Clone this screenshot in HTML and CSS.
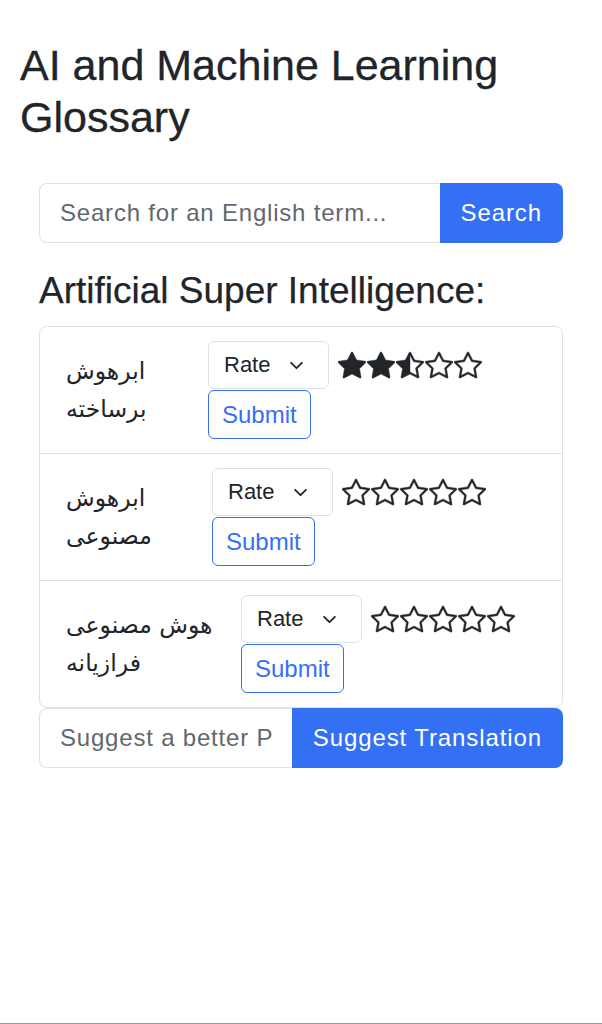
FILE: index.html
```html
<!DOCTYPE html>
<html lang="en">
<head>
<meta charset="utf-8">
<title>AI and Machine Learning Glossary</title>
<link rel="stylesheet" href="styles.css">
</head>
<body>
<div class="page">
  <h1 class="title">AI and Machine Learning Glossary</h1>
  <main class="panel">
    <form class="input-group search-group">
      <input class="field" type="text" placeholder="Search for an English term...">
      <button class="btn-primary" type="button">Search</button>
    </form>

    <h2 class="term-title">Artificial Super Intelligence:</h2>

    <div class="card">
      <div class="entry entry-1">
        <div class="persian" dir="rtl">ابرهوش برساخته</div>
        <div class="controls">
          <div class="rate-line">
            <div class="select"><span>Rate</span><svg class="chev" viewBox="0 0 16 10" width="16" height="10"><path d="M2 2l6 6 6-6" fill="none" stroke="#212529" stroke-width="2" stroke-linecap="round" stroke-linejoin="round"/></svg></div>
            <div class="stars">
              <svg class="star" viewBox="0 0 16 16"><path d="M3.612 15.443c-.386.198-.824-.149-.746-.592l.83-4.73L.173 6.765c-.329-.314-.158-.888.283-.95l4.898-.696L7.538.792c.197-.39.73-.39.927 0l2.184 4.327 4.898.696c.441.062.612.636.282.95l-3.522 3.356.83 4.73c.078.443-.36.79-.746.592L8 13.187l-4.389 2.256z"/></svg>
              <svg class="star" viewBox="0 0 16 16"><path d="M3.612 15.443c-.386.198-.824-.149-.746-.592l.83-4.73L.173 6.765c-.329-.314-.158-.888.283-.95l4.898-.696L7.538.792c.197-.39.73-.39.927 0l2.184 4.327 4.898.696c.441.062.612.636.282.95l-3.522 3.356.83 4.73c.078.443-.36.79-.746.592L8 13.187l-4.389 2.256z"/></svg>
              <svg class="star" viewBox="0 0 16 16"><path d="M5.354 5.119 7.538.792A.516.516 0 0 1 8 .5c.183 0 .366.097.465.292l2.184 4.327 4.898.696A.537.537 0 0 1 16 6.32a.548.548 0 0 1-.17.445l-3.523 3.356.83 4.73c.078.443-.36.79-.746.592L8 13.187l-4.389 2.256a.52.52 0 0 1-.146.05c-.342.06-.668-.254-.6-.642l.83-4.730L.173 6.765a.55.55 0 0 1-.172-.403.58.58 0 0 1 .085-.302.513.513 0 0 1 .37-.245l4.898-.696zM8 12.027a.5.5 0 0 1 .232.056l3.686 1.894-.694-3.957a.565.565 0 0 1 .162-.505l2.907-2.77-4.052-.576a.525.525 0 0 1-.393-.288L8.001 2.223 8 2.226v9.8z"/></svg>
              <svg class="star" viewBox="0 0 16 16"><path d="M2.866 14.85c-.078.444.36.791.746.593l4.39-2.256 4.389 2.256c.386.198.824-.149.746-.592l-.83-4.73 3.522-3.356c.33-.314.16-.888-.282-.95l-4.898-.696L8.465.792a.513.513 0 0 0-.927 0L5.354 5.12l-4.898.696c-.441.062-.612.636-.283.95l3.523 3.356-.83 4.73zm4.905-2.767-3.686 1.894.694-3.957a.565.565 0 0 0-.163-.505L1.71 6.745l4.052-.576a.525.525 0 0 0 .393-.288L8 2.223l1.847 3.658a.525.525 0 0 0 .393.288l4.052.575-2.906 2.77a.565.565 0 0 0-.163.506l.694 3.957-3.686-1.894a.503.503 0 0 0-.461 0z"/></svg>
              <svg class="star" viewBox="0 0 16 16"><path d="M2.866 14.85c-.078.444.36.791.746.593l4.39-2.256 4.389 2.256c.386.198.824-.149.746-.592l-.83-4.73 3.522-3.356c.33-.314.16-.888-.282-.95l-4.898-.696L8.465.792a.513.513 0 0 0-.927 0L5.354 5.12l-4.898.696c-.441.062-.612.636-.283.95l3.523 3.356-.83 4.73zm4.905-2.767-3.686 1.894.694-3.957a.565.565 0 0 0-.163-.505L1.71 6.745l4.052-.576a.525.525 0 0 0 .393-.288L8 2.223l1.847 3.658a.525.525 0 0 0 .393.288l4.052.575-2.906 2.77a.565.565 0 0 0-.163.506l.694 3.957-3.686-1.894a.503.503 0 0 0-.461 0z"/></svg>
            </div>
          </div>
          <button class="btn-outline" type="button">Submit</button>
        </div>
      </div>

      <div class="entry entry-2">
        <div class="persian" dir="rtl">ابرهوش مصنوعی</div>
        <div class="controls">
          <div class="rate-line">
            <div class="select"><span>Rate</span><svg class="chev" viewBox="0 0 16 10" width="16" height="10"><path d="M2 2l6 6 6-6" fill="none" stroke="#212529" stroke-width="2" stroke-linecap="round" stroke-linejoin="round"/></svg></div>
            <div class="stars">
              <svg class="star" viewBox="0 0 16 16"><path d="M2.866 14.85c-.078.444.36.791.746.593l4.39-2.256 4.389 2.256c.386.198.824-.149.746-.592l-.83-4.73 3.522-3.356c.33-.314.16-.888-.282-.95l-4.898-.696L8.465.792a.513.513 0 0 0-.927 0L5.354 5.12l-4.898.696c-.441.062-.612.636-.283.95l3.523 3.356-.83 4.73zm4.905-2.767-3.686 1.894.694-3.957a.565.565 0 0 0-.163-.505L1.71 6.745l4.052-.576a.525.525 0 0 0 .393-.288L8 2.223l1.847 3.658a.525.525 0 0 0 .393.288l4.052.575-2.906 2.77a.565.565 0 0 0-.163.506l.694 3.957-3.686-1.894a.503.503 0 0 0-.461 0z"/></svg>
              <svg class="star" viewBox="0 0 16 16"><path d="M2.866 14.85c-.078.444.36.791.746.593l4.39-2.256 4.389 2.256c.386.198.824-.149.746-.592l-.83-4.73 3.522-3.356c.33-.314.16-.888-.282-.95l-4.898-.696L8.465.792a.513.513 0 0 0-.927 0L5.354 5.12l-4.898.696c-.441.062-.612.636-.283.95l3.523 3.356-.83 4.73zm4.905-2.767-3.686 1.894.694-3.957a.565.565 0 0 0-.163-.505L1.71 6.745l4.052-.576a.525.525 0 0 0 .393-.288L8 2.223l1.847 3.658a.525.525 0 0 0 .393.288l4.052.575-2.906 2.77a.565.565 0 0 0-.163.506l.694 3.957-3.686-1.894a.503.503 0 0 0-.461 0z"/></svg>
              <svg class="star" viewBox="0 0 16 16"><path d="M2.866 14.85c-.078.444.36.791.746.593l4.39-2.256 4.389 2.256c.386.198.824-.149.746-.592l-.83-4.73 3.522-3.356c.33-.314.16-.888-.282-.95l-4.898-.696L8.465.792a.513.513 0 0 0-.927 0L5.354 5.12l-4.898.696c-.441.062-.612.636-.283.95l3.523 3.356-.83 4.73zm4.905-2.767-3.686 1.894.694-3.957a.565.565 0 0 0-.163-.505L1.71 6.745l4.052-.576a.525.525 0 0 0 .393-.288L8 2.223l1.847 3.658a.525.525 0 0 0 .393.288l4.052.575-2.906 2.77a.565.565 0 0 0-.163.506l.694 3.957-3.686-1.894a.503.503 0 0 0-.461 0z"/></svg>
              <svg class="star" viewBox="0 0 16 16"><path d="M2.866 14.85c-.078.444.36.791.746.593l4.39-2.256 4.389 2.256c.386.198.824-.149.746-.592l-.83-4.73 3.522-3.356c.33-.314.16-.888-.282-.95l-4.898-.696L8.465.792a.513.513 0 0 0-.927 0L5.354 5.12l-4.898.696c-.441.062-.612.636-.283.95l3.523 3.356-.83 4.73zm4.905-2.767-3.686 1.894.694-3.957a.565.565 0 0 0-.163-.505L1.71 6.745l4.052-.576a.525.525 0 0 0 .393-.288L8 2.223l1.847 3.658a.525.525 0 0 0 .393.288l4.052.575-2.906 2.77a.565.565 0 0 0-.163.506l.694 3.957-3.686-1.894a.503.503 0 0 0-.461 0z"/></svg>
              <svg class="star" viewBox="0 0 16 16"><path d="M2.866 14.85c-.078.444.36.791.746.593l4.39-2.256 4.389 2.256c.386.198.824-.149.746-.592l-.83-4.73 3.522-3.356c.33-.314.16-.888-.282-.95l-4.898-.696L8.465.792a.513.513 0 0 0-.927 0L5.354 5.12l-4.898.696c-.441.062-.612.636-.283.95l3.523 3.356-.83 4.73zm4.905-2.767-3.686 1.894.694-3.957a.565.565 0 0 0-.163-.505L1.71 6.745l4.052-.576a.525.525 0 0 0 .393-.288L8 2.223l1.847 3.658a.525.525 0 0 0 .393.288l4.052.575-2.906 2.77a.565.565 0 0 0-.163.506l.694 3.957-3.686-1.894a.503.503 0 0 0-.461 0z"/></svg>
            </div>
          </div>
          <button class="btn-outline" type="button">Submit</button>
        </div>
      </div>

      <div class="entry entry-3">
        <div class="persian" dir="rtl">هوش مصنوعی فرازیانه</div>
        <div class="controls">
          <div class="rate-line">
            <div class="select"><span>Rate</span><svg class="chev" viewBox="0 0 16 10" width="16" height="10"><path d="M2 2l6 6 6-6" fill="none" stroke="#212529" stroke-width="2" stroke-linecap="round" stroke-linejoin="round"/></svg></div>
            <div class="stars">
              <svg class="star" viewBox="0 0 16 16"><path d="M2.866 14.85c-.078.444.36.791.746.593l4.39-2.256 4.389 2.256c.386.198.824-.149.746-.592l-.83-4.73 3.522-3.356c.33-.314.16-.888-.282-.95l-4.898-.696L8.465.792a.513.513 0 0 0-.927 0L5.354 5.12l-4.898.696c-.441.062-.612.636-.283.95l3.523 3.356-.83 4.73zm4.905-2.767-3.686 1.894.694-3.957a.565.565 0 0 0-.163-.505L1.71 6.745l4.052-.576a.525.525 0 0 0 .393-.288L8 2.223l1.847 3.658a.525.525 0 0 0 .393.288l4.052.575-2.906 2.77a.565.565 0 0 0-.163.506l.694 3.957-3.686-1.894a.503.503 0 0 0-.461 0z"/></svg>
              <svg class="star" viewBox="0 0 16 16"><path d="M2.866 14.85c-.078.444.36.791.746.593l4.39-2.256 4.389 2.256c.386.198.824-.149.746-.592l-.83-4.73 3.522-3.356c.33-.314.16-.888-.282-.95l-4.898-.696L8.465.792a.513.513 0 0 0-.927 0L5.354 5.12l-4.898.696c-.441.062-.612.636-.283.95l3.523 3.356-.83 4.73zm4.905-2.767-3.686 1.894.694-3.957a.565.565 0 0 0-.163-.505L1.71 6.745l4.052-.576a.525.525 0 0 0 .393-.288L8 2.223l1.847 3.658a.525.525 0 0 0 .393.288l4.052.575-2.906 2.77a.565.565 0 0 0-.163.506l.694 3.957-3.686-1.894a.503.503 0 0 0-.461 0z"/></svg>
              <svg class="star" viewBox="0 0 16 16"><path d="M2.866 14.85c-.078.444.36.791.746.593l4.39-2.256 4.389 2.256c.386.198.824-.149.746-.592l-.83-4.73 3.522-3.356c.33-.314.16-.888-.282-.95l-4.898-.696L8.465.792a.513.513 0 0 0-.927 0L5.354 5.12l-4.898.696c-.441.062-.612.636-.283.95l3.523 3.356-.83 4.73zm4.905-2.767-3.686 1.894.694-3.957a.565.565 0 0 0-.163-.505L1.71 6.745l4.052-.576a.525.525 0 0 0 .393-.288L8 2.223l1.847 3.658a.525.525 0 0 0 .393.288l4.052.575-2.906 2.77a.565.565 0 0 0-.163.506l.694 3.957-3.686-1.894a.503.503 0 0 0-.461 0z"/></svg>
              <svg class="star" viewBox="0 0 16 16"><path d="M2.866 14.85c-.078.444.36.791.746.593l4.39-2.256 4.389 2.256c.386.198.824-.149.746-.592l-.83-4.73 3.522-3.356c.33-.314.16-.888-.282-.95l-4.898-.696L8.465.792a.513.513 0 0 0-.927 0L5.354 5.12l-4.898.696c-.441.062-.612.636-.283.95l3.523 3.356-.83 4.73zm4.905-2.767-3.686 1.894.694-3.957a.565.565 0 0 0-.163-.505L1.71 6.745l4.052-.576a.525.525 0 0 0 .393-.288L8 2.223l1.847 3.658a.525.525 0 0 0 .393.288l4.052.575-2.906 2.77a.565.565 0 0 0-.163.506l.694 3.957-3.686-1.894a.503.503 0 0 0-.461 0z"/></svg>
              <svg class="star" viewBox="0 0 16 16"><path d="M2.866 14.85c-.078.444.36.791.746.593l4.39-2.256 4.389 2.256c.386.198.824-.149.746-.592l-.83-4.73 3.522-3.356c.33-.314.16-.888-.282-.95l-4.898-.696L8.465.792a.513.513 0 0 0-.927 0L5.354 5.12l-4.898.696c-.441.062-.612.636-.283.95l3.523 3.356-.83 4.73zm4.905-2.767-3.686 1.894.694-3.957a.565.565 0 0 0-.163-.505L1.71 6.745l4.052-.576a.525.525 0 0 0 .393-.288L8 2.223l1.847 3.658a.525.525 0 0 0 .393.288l4.052.575-2.906 2.77a.565.565 0 0 0-.163.506l.694 3.957-3.686-1.894a.503.503 0 0 0-.461 0z"/></svg>
            </div>
          </div>
          <button class="btn-outline" type="button">Submit</button>
        </div>
      </div>
    </div>

    <form class="input-group suggest-group">
      <input class="field" type="text" placeholder="Suggest a better Persian translation...">
      <button class="btn-primary" type="button">Suggest Translation</button>
    </form>
  </main>
</div>
</body>
</html>
```

FILE: styles.css
```css
* { box-sizing: border-box; }

html, body {
  margin: 0;
  padding: 0;
  background: #ffffff;
}

body {
  font-family: "Liberation Sans", Arial, "DejaVu Sans", sans-serif;
  color: #212529;
  font-size: 24px;
}

.page {
  min-height: 1024px;
  border-bottom: 1px solid #9a9a9a;
  padding: 39px 20px 0;
}

.title {
  margin: 0;
  font-size: 43px;
  line-height: 52px;
  font-weight: 400;
  color: #212529;
  -webkit-text-stroke: 0.3px #212529;
}

.panel {
  margin: 40px 19px 0;
}

.input-group {
  display: flex;
  height: 60px;
}

.field {
  flex: 1 1 auto;
  min-width: 0;
  height: 60px;
  border: 1px solid #dee2e6;
  border-right: none;
  border-radius: 8px 0 0 8px;
  padding: 0 20px;
  font-family: inherit;
  font-size: 24px;
  letter-spacing: 0.8px;
  color: #212529;
  background: #fff;
  outline: none;
}

.field::placeholder {
  color: #62686e;
  opacity: 1;
}

.btn-primary {
  flex: 0 0 auto;
  height: 60px;
  border: none;
  border-radius: 0 8px 8px 0;
  background: #3470f3;
  color: #ffffff;
  font-family: inherit;
  font-size: 24px;
  letter-spacing: 0.9px;
  padding: 0 21px;
}

.term-title {
  margin: 26px 0 14px;
  font-size: 37px;
  line-height: 43px;
  font-weight: 400;
  color: #212529;
  -webkit-text-stroke: 0.25px #212529;
}

.card {
  border: 1px solid #dee2e6;
  border-radius: 8px;
}

.entry {
  display: flex;
  align-items: center;
  padding: 14px 26px;
  min-height: 125px;
}

.entry + .entry {
  border-top: 1px solid #dee2e6;
}

.persian {
  flex: 0 0 auto;
  text-align: left;
  font-family: "DejaVu Sans", sans-serif;
  font-size: 23.5px;
  line-height: 38px;
  color: #212529;
}

.entry-1 .persian { width: 142px; padding-right: 40px; }
.entry-2 .persian { width: 146px; padding-right: 40px; }
.entry-3 .persian { width: 175px; padding-right: 12px; }

.controls {
  display: flex;
  flex-direction: column;
  align-items: flex-start;
  gap: 1px;
}

.rate-line {
  display: flex;
  align-items: center;
  gap: 9px;
}

.select {
  display: flex;
  align-items: center;
  justify-content: space-between;
  width: 121px;
  height: 48px;
  padding: 0 24px 0 15px;
  border: 1px solid #dee2e6;
  border-radius: 6px;
  font-size: 22px;
  color: #212529;
  background: #fff;
}

.chev {
  width: 15px;
  height: 9px;
}

.stars {
  display: flex;
  gap: 1px;
}

.star {
  width: 28px;
  height: 28px;
  fill: #212529;
  stroke: #212529;
  stroke-width: 0.25px;
}

.btn-outline {
  height: 49px;
  padding: 0 13px;
  border: 1.5px solid #3470f3;
  border-radius: 6px;
  background: #fff;
  color: #3470f3;
  font-family: inherit;
  font-size: 24px;
}

.suggest-group {
  margin-top: 0;
}
```
